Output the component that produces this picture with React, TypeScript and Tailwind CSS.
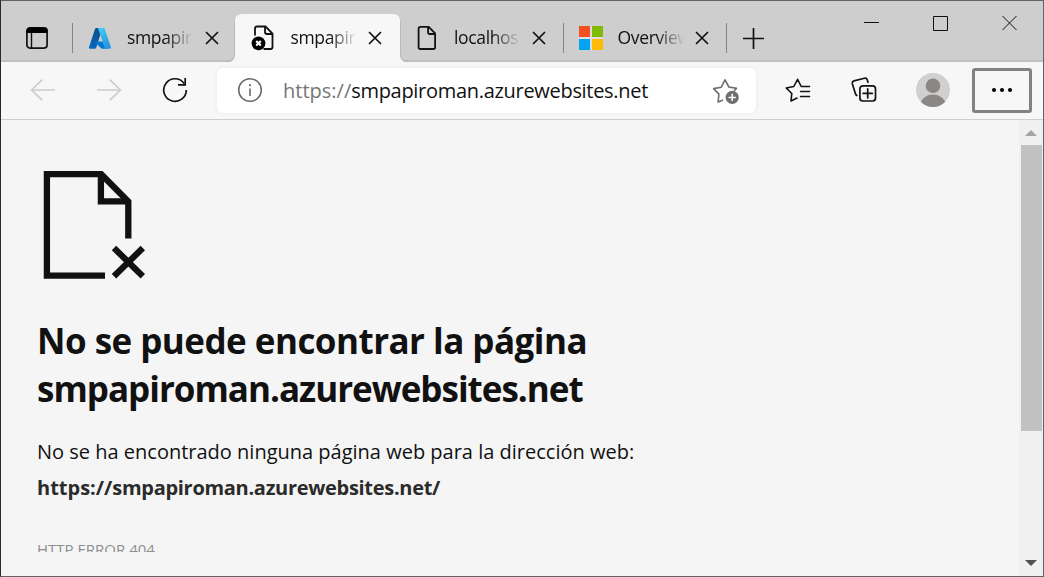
import React from "react";

type IconProps = { className?: string };

const CloseIcon = () => (
  <svg width="14" height="14" viewBox="0 0 14 14" fill="none" stroke="#111" strokeWidth="1.7" strokeLinecap="round">
    <path d="M1.5 1.5l11 11M12.5 1.5l-11 11" />
  </svg>
);

const AzureIcon = () => (
  <svg width="24" height="24" viewBox="0 0 24 24">
    <defs>
      <linearGradient id="azLeft" x1="0.6" y1="0" x2="0.3" y2="1">
        <stop offset="0" stopColor="#114a8b" />
        <stop offset="1" stopColor="#0669bc" />
      </linearGradient>
      <linearGradient id="azRight" x1="0.3" y1="0" x2="0.7" y2="1">
        <stop offset="0" stopColor="#3ccbf4" />
        <stop offset="1" stopColor="#2892df" />
      </linearGradient>
    </defs>
    <path d="M8.3 2h6.2L8.2 21.8q-.4 1-1.4 1H2q-1.4-.2-1-1.6L7 3q.3-1 1.3-1z" fill="url(#azLeft)" />
    <path d="M17 15.6H7.3q-.9.3-.3 1l6.2 5.7q.6.5 1.4.5H20z" fill="#0078d4" />
    <path d="M15.5 2H9q1 0 1.3 1l6.2 18.3q.3 1.3-1 1.5H22q1.3-.2.9-1.5L16.8 3q-.3-1-1.3-1z" fill="url(#azRight)" />
  </svg>
);

const ErrorPageIcon = () => (
  <svg width="26" height="28" viewBox="1 0 26 28" fill="none">
    <path d="M5 11.500V4.5Q5 2.5 7 2.5h8.500l7 7V23q0 2-2 2h-7" stroke="#111" strokeWidth="1.8" />
    <path d="M15 3v5q0 2 2 2H22.500" stroke="#111" strokeWidth="1.8" />
    <circle cx="8.5" cy="19.3" r="6.9" fill="#000" />
    <path d="M6.2 17l4.6 4.6M10.800 17l-4.600 4.600" stroke="#fff" strokeWidth="2.1" />
  </svg>
);

const PageIcon = () => (
  <svg width="26" height="28" viewBox="0 0 26 28" fill="none" stroke="#111" strokeWidth="1.8" strokeLinejoin="round">
    <path d="M6.4 2.9h8.3l6.4 6.5V23.2q0 1.8-1.8 1.8H6.4q-1.8 0-1.8-1.8V4.7q0-1.8 1.8-1.8z" />
    <path d="M14.1 3v5.2q0 1.8 1.8 1.8h5.1" />
  </svg>
);

const MicrosoftIcon = () => (
  <svg width="24" height="24" viewBox="0 0 24 24">
    <path fill="#dedede" d="M0 0h24v24H0z" />
    <path fill="#f35022" d="M0 0h11v11H0z" />
    <path fill="#80bb03" d="M13 0h11v11H13z" />
    <path fill="#03a5f0" d="M0 13h11v11H0z" />
    <path fill="#ffba08" d="M13 13h11v11H13z" />
  </svg>
);

const TabListIcon = () => (
  <svg width="22" height="22" viewBox="0 0 22 22" fill="none">
    <rect x=".9" y=".9" width="20.2" height="20.2" rx="3" stroke="#111" strokeWidth="1.7" />
    <path d="M.5 6V4Q.5.5 4 .5h14Q21.5.5 21.5 4v2z" fill="#000" />
    <path d="M5.5 6v15" stroke="#111" strokeWidth="1.4" />
  </svg>
);

const ArrowLeft = ({ className }: IconProps) => (
  <svg className={className} width="26" height="24" viewBox="0 0 26 24" fill="none" stroke="#cbcbcb" strokeWidth="1.5">
    <path d="M25 12H1.5M12.3 1.6L1.6 12l10.7 10.4" />
  </svg>
);

const ReloadIcon = () => (
  <svg width="26" height="26" viewBox="0 0 26 26" fill="none" stroke="#111" strokeWidth="1.7">
    <path d="M22.2 6.5A11.3 11.3 0 1 0 24.3 13" />
    <path d="M23.2 1v6.9H16" />
  </svg>
);

const InfoIcon = () => (
  <svg width="26" height="26" viewBox="0 0 26 26" fill="none" stroke="#6b6b6b" strokeWidth="1.6">
    <circle cx="13" cy="13" r="11.3" />
    <path d="M13 11.5V19" />
    <circle cx="13" cy="8.2" r="1.1" fill="#6b6b6b" stroke="none" />
  </svg>
);

const AddFavoriteIcon = () => (
  <svg width="28" height="28" viewBox="0 0 28 28" fill="none">
    <path
      d="M10.5 23.2L6.1 25l.8-7.9L1.6 11.600l7.700-1.400L13 2.800l3.900 7.200 7.600 1.400-2 2.100"
      stroke="#6e6e6e"
      strokeWidth="1.6"
      strokeLinejoin="round"
      strokeLinecap="round"
    />
    <circle cx="20.200" cy="20.4" r="6.6" fill="#6e6e6e" />
    <path d="M20.200 16.8V24M16.600 20.4h7.2" stroke="#fff" strokeWidth="1.5" />
  </svg>
);

const FavoritesIcon = () => (
  <svg width="26" height="26" viewBox="0 0 26 26" fill="none" stroke="#111" strokeWidth="1.6" strokeLinejoin="round" strokeLinecap="round">
    <path d="M12 21L6 24l.8-7.500-5.600-5.500 7.600-1.500L12.600 2.300l3.600 7.200h8.300" />
    <path d="M15.600 14.500h8.900M15.600 19.500h8.900" />
  </svg>
);

const CollectionsIcon = () => (
  <svg width="26" height="26" viewBox="0 0 26 26" fill="none" stroke="#111" strokeWidth="1.7" strokeLinecap="round">
    <path d="M5.800 18.600Q4.700 18 4.200 16L1.400 6.900Q.8 4.500 3 3.900L13.400 1.300q2.200-.5 2.900 1.600l.7 2.400" />
    <rect x="8.9" y="8.8" width="15.6" height="15.2" rx="3" />
    <path d="M16.700 11.800v9.200M12.100 16.400h9.200" />
  </svg>
);

const ProfileIcon = () => (
  <svg width="34" height="34" viewBox="0 0 34 34">
    <clipPath id="avatar">
      <circle cx="17" cy="17" r="17" />
    </clipPath>
    <g clipPath="url(#avatar)">
      <path fill="#d2d0ce" d="M0 0h34v34H0z" />
      <circle cx="17" cy="12.8" r="7.3" fill="#8a8886" />
      <ellipse cx="17" cy="33" rx="12.8" ry="11.5" fill="#8a8886" />
    </g>
  </svg>
);

const MissingPageIcon = () => (
  <svg width="103" height="108" viewBox="-0.6 0 103 108" fill="none" stroke="#111" strokeWidth="6.3">
    <path d="M61.400 104.700H3.300V3.200h54.300L84.700 30.500V67.500" />
    <path d="M57.300 3v27.300h27.500" />
    <path d="M70.400 77l28.800 28.300M99.200 77L70.400 105.300" />
  </svg>
);

type TabData = { title: string; icon: React.ReactNode; active?: boolean };

const tabs: TabData[] = [
  { title: "smpapir", icon: <AzureIcon /> },
  { title: "smpapir", icon: <ErrorPageIcon />, active: true },
  { title: "localhos", icon: <PageIcon /> },
  { title: "Overview", icon: <MicrosoftIcon /> },
];

const ActiveTabShape = () => (
  <svg className="absolute -left-[9px] top-0" width="181" height="49" viewBox="0 0 181 49">
    <path
      d="M0 48.500Q8 48.500 8 40V7Q8 0 15 0H166Q173 0 173 7V40Q173 48.500 181 48.500V49H0z"
      fill="#f7f7f7"
    />
    <path d="M0 47.500Q7.500 47.500 7.500 40V7M173.500 7V40Q173.500 47.500 181 47.500" fill="none" stroke="#b9b9b9" />
  </svg>
);

const Tab = ({ title, icon, active }: TabData) => (
  <div className="relative flex h-[48px] w-[163.5px] shrink-0 items-center">
    {active && <ActiveTabShape />}
    <div className="relative ml-[15px] flex w-[26px] justify-center">{icon}</div>
    <div className="relative ml-[14px] w-[68px] pb-[1px] text-[17.5px] leading-[27px] tracking-[-0.35px] whitespace-nowrap [mask-image:linear-gradient(to_right,black_56%,transparent_97%)]">
      {title}
    </div>
    <div className="relative ml-[9.5px]">
      <CloseIcon />
    </div>
  </div>
);

const Divider = ({ hidden }: { hidden?: boolean }) => (
  <div className={hidden ? "-mr-px h-[30px] w-px" : "-mr-px h-[30px] w-px bg-[#858585]"} />
);

export default function App() {
  return (
    <div className="flex h-[577px] w-[1044px] flex-col overflow-hidden border border-[#646264] border-l-[#202a38] bg-[#f5f5f5] font-['Open_Sans',sans-serif] text-[#111]">
      <header className="flex h-[61px] shrink-0 items-start border-b-2 border-[#bfbfbf] bg-[#cecece]">
        <div className="mt-[13px] flex h-[48px] items-center">
          <div className="flex w-[71px] pl-[25px]">
            <TabListIcon />
          </div>
          <Divider />
          {tabs.map((tab, i) => (
            <React.Fragment key={i}>
              <Tab {...tab} />
              <Divider hidden={i < 2} />
            </React.Fragment>
          ))}
          <svg className="ml-[17px]" width="21" height="21" viewBox="0 0 21 21" stroke="#111" strokeWidth="1.7">
            <path d="M10.500 0v21M0 10.500h21" />
          </svg>
        </div>
        <div className="mt-[14px] mr-[26px] ml-auto flex items-center gap-[54px]">
          <svg width="15" height="16" viewBox="0 0 15 16" stroke="#111">
            <path d="M0 7.500h15" />
          </svg>
          <svg width="15" height="16" viewBox="0 0 15 16" fill="none" stroke="#111">
            <path d="M.5 1.500h14v14H.5z" />
          </svg>
          <svg width="15" height="16" viewBox="0 0 15 16" stroke="#111">
            <path d="M.5 1l14 14M14.500 1L.5 15" />
          </svg>
        </div>
      </header>

      <nav className="flex h-[58px] shrink-0 items-center border-b border-[#cfcfcf] bg-[#f7f7f7] pr-[11px] pb-px pl-[29px]">
        <ArrowLeft />
        <ArrowLeft className="ml-[40px] rotate-180" />
        <div className="ml-[40px]">
          <ReloadIcon />
        </div>
        <div className="ml-[29px] flex h-[45px] w-[539px] items-center rounded-md bg-white pr-[16px] pl-[20px] shadow-[0_0_5px_rgba(0,0,0,0.06)]">
          <InfoIcon />
          <div className="ml-[20px] pt-[2px] text-[20px] leading-[30px] whitespace-nowrap">
            <span className="text-[#767676]">https://</span>
            <span className="tracking-[-0.3px]">smpapiroman.azurewebsites.net</span>
          </div>
          <div className="ml-auto pt-[2px]">
            <AddFavoriteIcon />
          </div>
        </div>
        <div className="ml-[29px]">
          <FavoritesIcon />
        </div>
        <div className="ml-[40px]">
          <CollectionsIcon />
        </div>
        <div className="ml-[39px]">
          <ProfileIcon />
        </div>
        <div className="ml-auto flex h-[45px] w-[60px] items-center justify-center gap-[4px] rounded-[3px] border-3 border-[#828282]">
          <i className="size-[4px] rounded-full bg-black" />
          <i className="size-[4px] rounded-full bg-black" />
          <i className="size-[4px] rounded-full bg-black" />
        </div>
      </nav>

      <div className="flex min-h-0 flex-1">
        <main className="flex-1 pt-[51px] pl-[36px]">
          <div className="ml-[6px]">
            <MissingPageIcon />
          </div>
          <h1 className="mt-[38px] text-[35px] leading-[48px] font-bold whitespace-nowrap">
            <span className="tracking-[-0.53px]">No se puede encontrar la página</span>
            <br />
            <span className="tracking-[-1px]">smpapiroman.azurewebsites.net</span>
          </h1>
          <p className="mt-[21px] text-[20px] leading-[36px] whitespace-nowrap">
            No se ha encontrado ninguna página web para la dirección web:
            <br />
            <strong className="text-[#2b2b2b]">
              https://<span className="tracking-[-0.3px]">smpapiroman.azurewebsites.net/</span>
            </strong>
          </p>
          <div className="mt-[33px] h-[13px] overflow-hidden text-[15px] leading-[20px] text-[#8e8e8e]">HTTP ERROR 404</div>
        </main>
        <aside className="flex w-[24px] flex-col items-center bg-[#f0f0f0] pt-[10px] pb-[10px]">
          <svg width="12" height="6" viewBox="0 0 12 6" fill="#a3a3a3">
            <path d="M0 6l6-6 6 6z" />
          </svg>
          <div className="mt-[9px] h-[286px] w-[21px] bg-[#c1c1c1]" />
          <svg className="mt-auto" width="12" height="6" viewBox="0 0 12 6" fill="#505050">
            <path d="M0 0l6 6 6-6z" />
          </svg>
        </aside>
      </div>
    </div>
  );
}
